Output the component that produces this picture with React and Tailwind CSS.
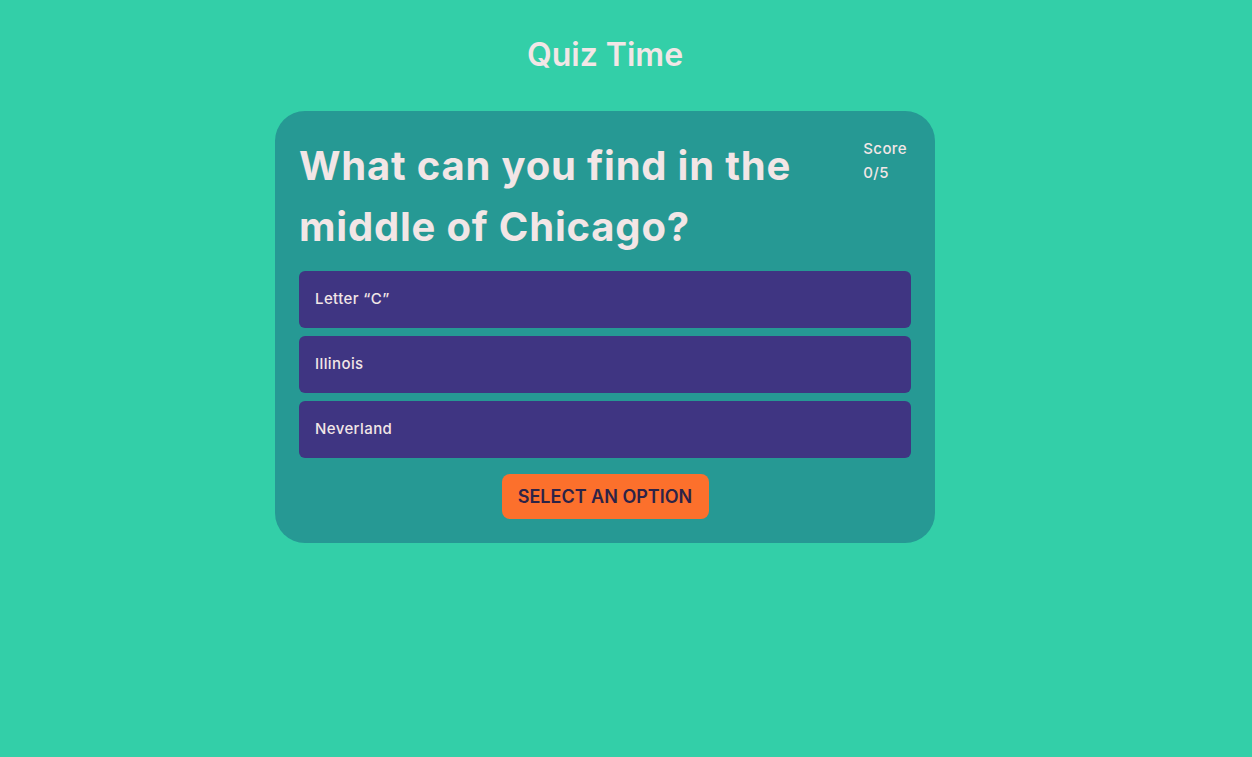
export default function App() {
  const options = ["Letter \u201CC\u201D", "Illinois", "Neverland"];
  return (
    <div
      className="min-h-[757px] w-full bg-[#33cfa8] text-[#f2e6e6]"
      style={{ fontFamily: "Inter, 'Noto Sans', sans-serif" }}
    >
      <div className="w-[1210px] flex flex-col items-center">
        <h1 className="mt-[33px] text-[32px] leading-[44px] font-semibold tracking-[0px]">Quiz Time</h1>
        <div className="mt-[34px] w-[660px] rounded-[30px] bg-[#269994] px-6 pt-6 pb-6">
          <div className="flex justify-between">
            <h2 className="w-[540px] text-[40px] leading-[61px] font-bold tracking-[0.8px]">
              What can you find in the middle of Chicago?
            </h2>
            <div className="mt-[2px] mr-[4px] text-[15px] leading-[24px] font-medium tracking-[0.4px]">
              <div>Score</div>
              <div>0/5</div>
            </div>
          </div>
          <div className="mt-[14px] flex flex-col gap-2">
            {options.map((o) => (
              <div
                key={o}
                className="h-[57px] rounded-md bg-[#3f3582] px-4 flex items-center text-[15px] font-medium tracking-[0.4px]"
              >
                {o}
              </div>
            ))}
          </div>
          <div className="mt-4 flex justify-center">
            <button className="h-[45px] w-[207px] rounded-lg bg-[#fc702c] text-[18px] font-semibold text-[#2d2347]">
              SELECT AN OPTION
            </button>
          </div>
        </div>
      </div>
    </div>
  );
}
